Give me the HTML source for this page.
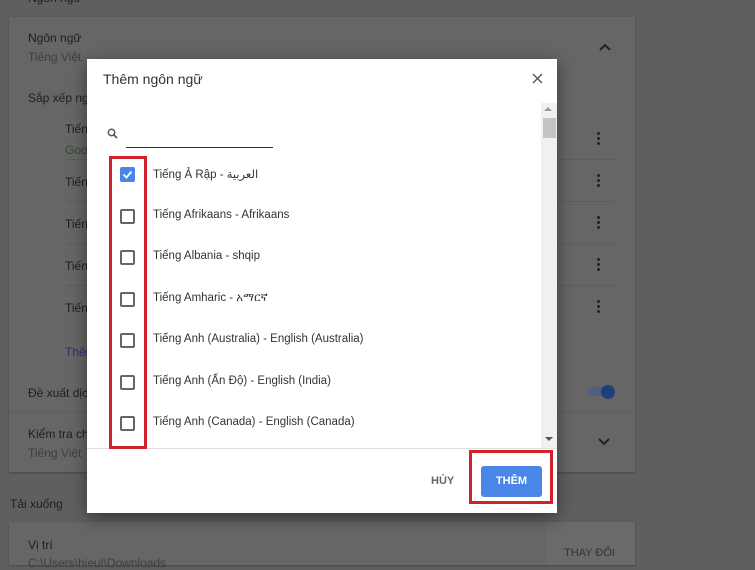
<!DOCTYPE html>
<html style="background:#5f5f5f;color-scheme:light"><head><meta charset="utf-8">
<style>
*{margin:0;padding:0;box-sizing:border-box}
html,body{background:#5f5f5f}
body{width:755px;height:565px;overflow:hidden;font-family:"Liberation Sans","DejaVu Sans",sans-serif;position:relative;color:#222}
.bg{position:absolute;left:0;top:0;width:755px;height:565px;background:#5f5f5f}
.a{position:absolute;white-space:nowrap}
.card{position:absolute;background:#666;box-shadow:0 1px 2px rgba(0,0,0,.25)}
.bt{color:#1e1e1e;font-size:12px}
.bs{color:#3e3e3e;font-size:12px}
.dots{position:absolute;width:3px}
.dots i{display:block;width:3px;height:3px;border-radius:50%;background:#222;margin-bottom:2px}
.hr{position:absolute;height:1px;background:#5d5d5d}
.dlg{position:absolute;left:87px;top:59px;width:470px;height:454px;background:#fff;box-shadow:0 4px 16px rgba(0,0,0,.45)}
.cb{position:absolute;left:33px;width:15px;height:15px;border:2px solid #666;border-radius:2px}
.lt{position:absolute;left:66px;font-size:11.5px;color:#333}
</style></head><body>
<div class="bg"></div>
<div class="a bt" style="left:28px;top:-9px;font-size:12px">Ngôn ngữ</div>
<div class="card" style="left:9px;top:17px;width:626px;height:455px"></div>
<div class="a bt" style="left:28px;top:31px">Ngôn ngữ</div>
<div class="a bs" style="left:28px;top:50px">Tiếng Việt</div>
<svg class="a" style="left:598px;top:42px" width="14" height="10"><path d="M2 8 L7 3 L12 8" stroke="#222" stroke-width="2" fill="none"/></svg>
<div class="a bt" style="left:28px;top:91px">Sắp xếp ngôn ngữ</div>
<div class="a bt" style="left:65px;top:122px">Tiếng</div>
<div class="a" style="left:65px;top:143px;font-size:12px;color:#2e4a2e">Google</div>
<div class="hr" style="left:65px;top:159px;width:550px"></div>
<div class="a bt" style="left:65px;top:175px">Tiếng</div>
<div class="hr" style="left:65px;top:201px;width:550px"></div>
<div class="a bt" style="left:65px;top:217px">Tiếng</div>
<div class="hr" style="left:65px;top:243px;width:550px"></div>
<div class="a bt" style="left:65px;top:259px">Tiếng</div>
<div class="hr" style="left:65px;top:285px;width:550px"></div>
<div class="a bt" style="left:65px;top:301px">Tiếng</div>
<div class="dots" style="left:597px;top:132px"><i></i><i></i><i></i></div>
<div class="dots" style="left:597px;top:174px"><i></i><i></i><i></i></div>
<div class="dots" style="left:597px;top:216px"><i></i><i></i><i></i></div>
<div class="dots" style="left:597px;top:258px"><i></i><i></i><i></i></div>
<div class="dots" style="left:597px;top:300px"><i></i><i></i><i></i></div>
<div class="a" style="left:65px;top:345px;font-size:12px;color:#26336b">Thêm ngôn ngữ</div>
<div class="a bt" style="left:28px;top:386px">Đề xuất dịch</div>
<div class="a" style="left:588px;top:387px;width:22px;height:9px;border-radius:5px;background:#4e5f80"></div>
<div class="a" style="left:601px;top:385px;width:14px;height:14px;border-radius:50%;background:#1f3f7a"></div>
<div class="hr" style="left:9px;top:412px;width:626px"></div>
<div class="a bt" style="left:28px;top:427px">Kiểm tra chính tả</div>
<div class="a bs" style="left:28px;top:446px">Tiếng Việt</div>
<svg class="a" style="left:597px;top:437px" width="14" height="10"><path d="M2 2 L7 7 L12 2" stroke="#222" stroke-width="2" fill="none"/></svg>
<div class="a bt" style="left:10px;top:497px">Tải xuống</div>
<div class="card" style="left:9px;top:522px;width:626px;height:43px"></div>
<div class="a" style="left:546px;top:522px;width:89px;height:43px;background:#6a6a6a"></div>
<div class="a bt" style="left:28px;top:538px">Vị trí</div>
<div class="a bs" style="left:28px;top:556px">C:\Users\hieul\Downloads</div>
<div class="a" style="left:564px;top:547px;font-size:11px;color:#333">THAY ĐỔI</div>

<div class="dlg">
  <div class="a" style="left:16px;top:12px;font-size:14px;color:#333">Thêm ngôn ngữ</div>
  <svg class="a" style="left:445px;top:14px" width="11" height="11"><path d="M1 1L10 10M10 1L1 10" stroke="#555" stroke-width="1.4"/></svg>
  <svg class="a" style="left:20px;top:69px" width="11" height="11"><circle cx="4.5" cy="4.5" r="3.2" stroke="#555" stroke-width="1.5" fill="none"/><path d="M7 7L10 10" stroke="#555" stroke-width="1.7"/></svg>
  <div class="a" style="left:39px;top:88px;width:147px;height:1px;background:#333"></div>
  <div class="a" style="left:454px;top:44px;width:16px;height:345px;background:#f0f0f0"></div>
  <div class="a" style="left:457px;top:48px;width:0;height:0;border-left:4px solid transparent;border-right:4px solid transparent;border-bottom:4px solid #999"></div>
  <div class="a" style="left:456px;top:59px;width:13px;height:20px;background:#c4c4c4"></div>
  <div class="a" style="left:458px;top:378px;width:0;height:0;border-left:4px solid transparent;border-right:4px solid transparent;border-top:4px solid #555"></div>
  <div class="a" style="left:0;top:389px;width:470px;height:1px;background:#e0e0e0"></div>

  <div class="cb" style="top:108px;background:#4a86e8;border-color:#4a86e8"><svg width="11" height="11" style="position:absolute;left:0;top:0"><path d="M1.5 5.5L4.5 8.5L9.5 2.5" stroke="#fff" stroke-width="1.8" fill="none"/></svg></div>
  <div class="lt" style="top:108px">Tiếng Ả Rập - العربية</div>
  <div class="cb" style="top:150px"></div><div class="lt" style="top:150px">Tiếng Afrikaans - Afrikaans</div>
  <div class="cb" style="top:191px"></div><div class="lt" style="top:191px">Tiếng Albania - shqip</div>
  <div class="cb" style="top:233px"></div><div class="lt" style="top:233px">Tiếng Amharic - አማርኛ</div>
  <div class="cb" style="top:274px"></div><div class="lt" style="top:274px">Tiếng Anh (Australia) - English (Australia)</div>
  <div class="cb" style="top:316px"></div><div class="lt" style="top:316px">Tiếng Anh (Ấn Độ) - English (India)</div>
  <div class="cb" style="top:357px"></div><div class="lt" style="top:357px">Tiếng Anh (Canada) - English (Canada)</div>

  <div class="a" style="left:22px;top:97px;width:38px;height:293px;border:3px solid #d0222a"></div>
  <div class="a" style="left:344px;top:416px;font-size:11px;font-weight:bold;color:#666">HỦY</div>
  <div class="a" style="left:382px;top:391px;width:84px;height:54px;border:3px solid #d0222a"></div>
  <div class="a" style="left:394px;top:407px;width:61px;height:31px;background:#4a86e8;border-radius:3px;color:#fff;font-size:11px;font-weight:bold;text-align:center;line-height:31px">THÊM</div>
</div>
</body></html>
